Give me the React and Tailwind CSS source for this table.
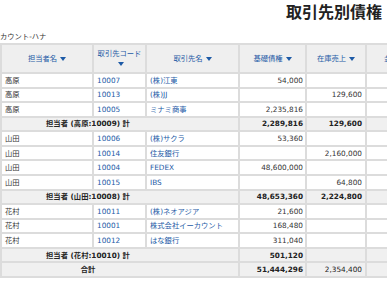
import React from "react";

const rows = [
  { t: "d", n: "高原", c: "10007", co: "(株)江東", a: "54,000", b: "" },
  { t: "d", n: "高原", c: "10013", co: "(株)JJ", a: "", b: "129,600" },
  { t: "d", n: "高原", c: "10005", co: "ミナミ商事", a: "2,235,816", b: "" },
  { t: "s", label: "担当者 (高原:10009) 計", a: "2,289,816", b: "129,600" },
  { t: "d", n: "山田", c: "10006", co: "(株)サクラ", a: "53,360", b: "" },
  { t: "d", n: "山田", c: "10014", co: "住友銀行", a: "", b: "2,160,000" },
  { t: "d", n: "山田", c: "10004", co: "FEDEX", a: "48,600,000", b: "" },
  { t: "d", n: "山田", c: "10015", co: "IBS", a: "", b: "64,800" },
  { t: "s", label: "担当者 (山田:10008) 計", a: "48,653,360", b: "2,224,800" },
  { t: "d", n: "花村", c: "10011", co: "(株)ネオアジア", a: "21,600", b: "" },
  { t: "d", n: "花村", c: "10001", co: "株式会社イーカウント", a: "168,480", b: "" },
  { t: "d", n: "花村", c: "10012", co: "はな銀行", a: "311,040", b: "" },
  { t: "s", label: "担当者 (花村:10010) 計", a: "501,120", b: "" },
  { t: "s", label: "合計", a: "51,444,296", b: "2,354,400", bNormal: true },
];

function Tri() {
  return (
    <svg width="6" height="4" viewBox="0 0 6 4" className="inline-block align-middle ml-[3px]">
      <polygon points="0,0 6,0 3,4" fill="currentColor" />
    </svg>
  );
}

const cell = "border-r-2 border-b-2 border-[#dcdcdc] flex items-center overflow-hidden whitespace-nowrap";

export default function App() {
  return (
    <div className="w-[387px] h-[293px] overflow-hidden bg-white font-['DejaVu_Sans','Noto_Sans_CJK_JP',sans-serif] text-[#333]">
      <div className="h-[31px] pt-[3px] pr-[5px] text-right text-[16px] leading-[16px] font-bold text-[#222] font-['Noto_Sans_CJK_JP',sans-serif]">
        取引先別債権
      </div>
      <div className="h-[12px] text-[7.3px] leading-[12px]">カウント-ハナ</div>
      <div className="grid w-[447px] grid-cols-[94px_53px_93px_67px_60px_80px] grid-rows-[31px_repeat(14,14.57px)] text-[7.3px] leading-[9px]">
        <div className={`${cell} border-l-2 border-t-2 bg-[#efefef] justify-center text-[#1d5aa6]`}>
          担当者名<Tri />
        </div>
        <div className={`${cell} border-t-2 bg-[#efefef] justify-center text-center text-[#1d5aa6] flex-col`}>
          <span>取引先コード</span>
          <span className="mt-[1px]"><Tri /></span>
        </div>
        <div className={`${cell} border-t-2 bg-[#efefef] justify-center text-[#1d5aa6]`}>
          取引先名<Tri />
        </div>
        <div className={`${cell} border-t-2 bg-[#efefef] justify-center text-[#1d5aa6]`}>
          基礎債権<Tri />
        </div>
        <div className={`${cell} border-t-2 bg-[#efefef] justify-center text-[#1d5aa6]`}>
          在庫売上<Tri />
        </div>
        <div className={`${cell} border-t-2 bg-[#efefef] justify-start pl-[17px] text-[#1d5aa6]`}>
          金額合計<Tri />
        </div>
        {rows.map((r, i) =>
          r.t === "d" ? (
            <React.Fragment key={i}>
              <div className={`${cell} border-l-2 pl-[3px]`}>{r.n}</div>
              <div className={`${cell} pl-[3px] text-[#1d5aa6]`}>{r.c}</div>
              <div className={`${cell} pl-[3px] text-[#1d5aa6]`}>{r.co}</div>
              <div className={`${cell} justify-end pr-[2px]`}>{r.a}</div>
              <div className={`${cell} justify-end pr-[3px]`}>{r.b}</div>
              <div className={`${cell}`}></div>
            </React.Fragment>
          ) : (
            <React.Fragment key={i}>
              <div className={`${cell} col-span-3 border-l-2 bg-[#f0f0f0] justify-center pr-[64px] font-bold text-[#222]`}>
                {r.label}
              </div>
              <div className={`${cell} bg-[#f0f0f0] justify-end pr-[2px] font-bold text-[#222]`}>{r.a}</div>
              <div className={`${cell} bg-[#f0f0f0] justify-end pr-[3px] text-[#222] ${r.bNormal ? "" : "font-bold"}`}>{r.b}</div>
              <div className={`${cell} bg-[#f0f0f0]`}></div>
            </React.Fragment>
          )
        )}
      </div>
    </div>
  );
}
